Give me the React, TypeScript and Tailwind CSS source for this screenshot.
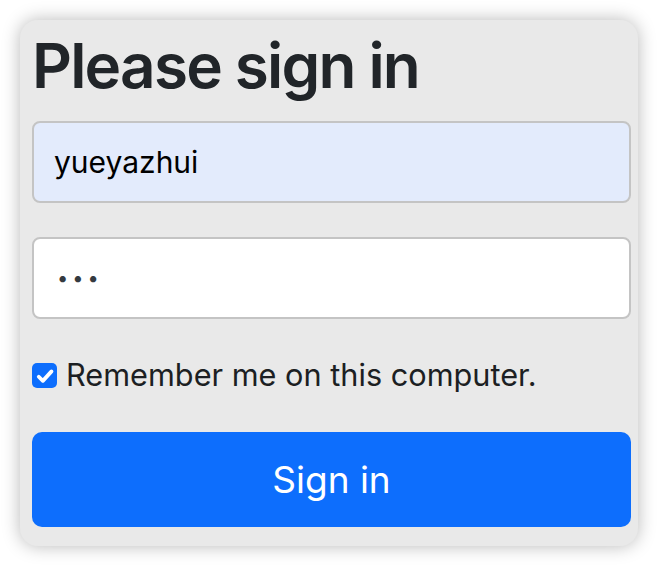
export default function App() {
  return (
    <div
      className="w-[658px] h-[566px] bg-white p-[20px]"
      style={{ fontFamily: "Inter, 'Liberation Sans', sans-serif" }}
    >
      <form className="h-full rounded-[18px] bg-[#e9e9e9] pl-[12px] pr-[7px] pt-[15px] shadow-[0_0_18px_rgba(0,0,0,0.28)]">
        <h1 className="text-[62px] font-semibold leading-[62px] text-[#212529] tracking-[-1.8px]">
          Please sign in
        </h1>
        <input
          type="text"
          defaultValue="yueyazhui"
          className="mt-[24px] block h-[82px] w-full rounded-[8px] border-2 border-[#c4c4c4] bg-[#e3ebfc] px-[20px] text-[30px] text-black outline-none"
        />
        <input
          type="password"
          defaultValue="123"
          className="mt-[34px] block h-[82px] w-full rounded-[8px] border-2 border-[#c4c4c4] bg-white px-[23px] text-[20px] tracking-[4px] text-[#343a40] outline-none"
        />
        <label className="mt-[41px] flex h-[31px] items-center gap-[9px] text-[30.7px] leading-none text-[#1c1f23]">
          <span className="flex h-[25px] w-[25px] items-center justify-center rounded-[5px] bg-[#0d6efd]">
            <svg width="20" height="20" viewBox="0 0 16 16" fill="none">
              <path
                d="M3 8.6l3.3 3.3L13.2 4.3"
                stroke="white"
                strokeWidth="3"
                strokeLinecap="round"
                strokeLinejoin="round"
              />
            </svg>
          </span>
          Remember me on this computer.
        </label>
        <button
          type="button"
          className="mt-[41px] block h-[95px] w-full rounded-[10px] bg-[#0d6efd] text-[37px] text-white"
        >
          Sign in
        </button>
      </form>
    </div>
  );
}
